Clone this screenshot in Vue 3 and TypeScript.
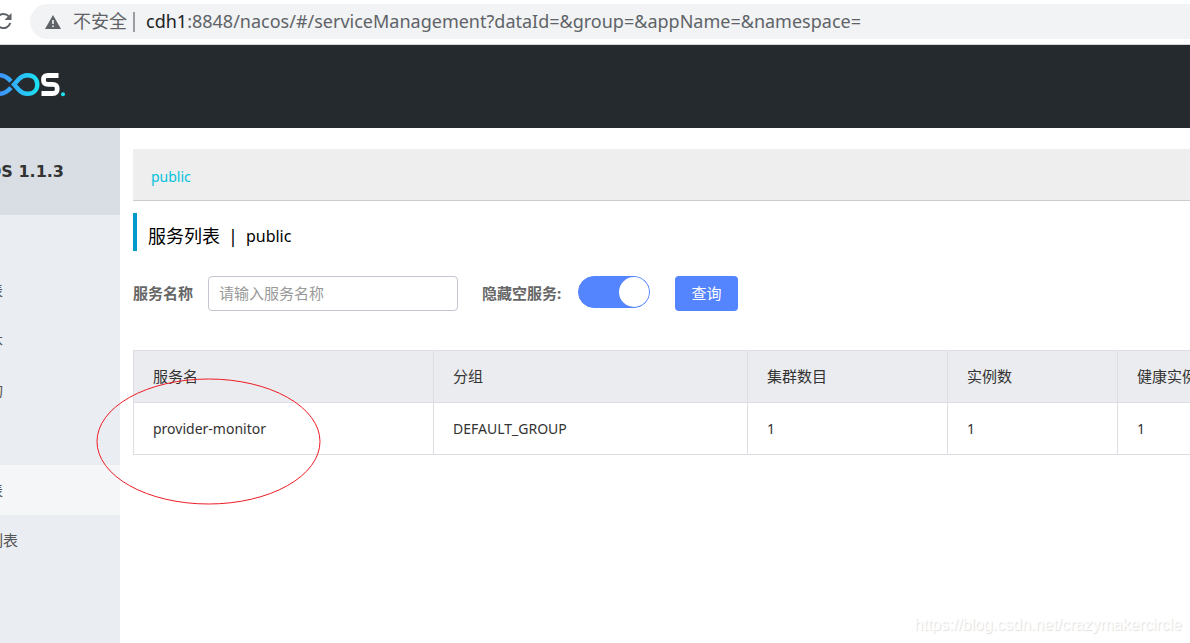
<script setup lang="ts">
import { ref } from 'vue'

interface Service {
  name: string
  group: string
  clusters: number
  instances: number
  healthy: number
}

const keyword = ref('')
const hideEmpty = ref(true)
const services: Service[] = [
  { name: 'provider-monitor', group: 'DEFAULT_GROUP', clusters: 1, instances: 1, healthy: 1 },
]
</script>

<template>
  <div class="window">
    <div class="toolbar">
      <button class="reload" type="button" aria-label="Reload">
        <svg width="24" height="35" viewBox="0 0 24 35">
          <path d="M22.300 19 A7 7 0 1 1 20.800 12.400" fill="none" stroke="#5f6368" stroke-width="2" />
          <path d="M23.500 9 V16 H16.500 Z" fill="#5f6368" />
        </svg>
      </button>
      <div class="address">
        <svg class="warning" width="16" height="14" viewBox="0 0 16 14">
          <path d="M8 0 L16 14 H0 Z" fill="#5f6368" />
          <path d="M7.200 5 H8.800 V9 H7.200 Z M7.200 10.400 H8.800 V12 H7.200 Z" fill="#f1f3f4" />
        </svg>
        <span class="insecure">不安全</span>
        <span class="divider"></span>
        <span class="url"><b>cdh1</b>:8848/nacos/#/serviceManagement?dataId=&amp;group=&amp;appName=&amp;namespace=</span>
      </div>
    </div>

    <header class="header">
      <svg class="logo" width="66" height="24" viewBox="0 0 66 24" aria-label="Nacos">
        <defs>
          <linearGradient id="loop" gradientUnits="userSpaceOnUse" x1="0" y1="0" x2="39" y2="0">
            <stop offset="0" stop-color="#3f93ff" />
            <stop offset="1" stop-color="#1be3f2" />
          </linearGradient>
        </defs>
        <g fill="none" stroke="url(#loop)" stroke-width="4.400">
          <path d="M-6 2.200 H0 C4.500 2.200 7 4 11 8.200" />
          <path d="M-6 20.800 H0 C4.500 20.800 7 19 11 14.800" />
          <path d="M14 11.500 L19 6 C21.500 3.300 24 2.200 27.500 2.200 C33.500 2.200 37.300 6 37.300 11.500 C37.300 17 33.500 20.800 27.500 20.800 C24 20.800 21.500 19.700 19 17 Z" />
        </g>
        <path d="M58.500 2.500 H48 C44.500 2.500 43.500 3.500 43.500 6.800 C43.500 10 44.500 11.300 48 11.300 H52.500 C56 11.300 57.200 12.500 57.200 15.800 C57.200 19.300 56 20.500 52.500 20.500 H41.500" fill="none" stroke="#fff" stroke-width="4.800" />
        <circle cx="63" cy="21.300" r="2" fill="#1be3f2" />
      </svg>
    </header>

    <div class="body">
      <aside class="sidebar">
        <div class="version">NACOS 1.1.3</div>
        <nav class="menu">
          <a class="heading" href="#">配置管理</a>
          <a href="#">配置列表</a>
          <a href="#">历史版本</a>
          <a href="#">监听查询</a>
          <a class="heading" href="#">服务管理</a>
          <a class="active" href="#">服务列表</a>
          <a class="wide" href="#">订阅者列表</a>
        </nav>
      </aside>

      <main class="content">
        <div class="namespaces"><a href="#">public</a></div>
        <h1 class="title"><span>服务列表</span><span>|</span><span class="current">public</span></h1>

        <form class="filters" @submit.prevent>
          <label for="service-name">服务名称</label>
          <input id="service-name" v-model="keyword" class="field" type="text" placeholder="请输入服务名称" />
          <label class="hide-label" for="hide-empty">隐藏空服务:</label>
          <input id="hide-empty" v-model="hideEmpty" class="switch" type="checkbox" />
          <button class="search" type="submit">查询</button>
        </form>

        <table class="services">
          <colgroup>
            <col class="c-name" />
            <col class="c-group" />
            <col class="c-clusters" />
            <col class="c-instances" />
            <col />
          </colgroup>
          <thead>
            <tr>
              <th>服务名</th>
              <th>分组</th>
              <th>集群数目</th>
              <th>实例数</th>
              <th>健康实例数</th>
            </tr>
          </thead>
          <tbody>
            <tr v-for="s in services" :key="s.name">
              <td>{{ s.name }}</td>
              <td>{{ s.group }}</td>
              <td>{{ s.clusters }}</td>
              <td>{{ s.instances }}</td>
              <td>{{ s.healthy }}</td>
            </tr>
          </tbody>
        </table>
      </main>
    </div>

    <svg class="marker" width="226" height="128" viewBox="0 0 226 128">
      <ellipse cx="112.500" cy="64.500" rx="111.500" ry="62.500" fill="none" stroke="#ed1c24" stroke-width="1" />
    </svg>
    <div class="watermark">https://blog.csdn.net/crazymakercircle</div>
  </div>
</template>

<style>
body {
  margin: 0;
}
</style>

<style scoped>
.window {
  position: relative;
  display: flex;
  flex-direction: column;
  min-height: 100vh;
  overflow: hidden;
  background: #fff;
  color: #333;
  font: 15px/20px "Noto Sans", "Noto Sans CJK SC", sans-serif;
}
.window * {
  box-sizing: border-box;
}
.toolbar {
  display: flex;
  align-items: flex-start;
  height: 45px;
  padding-top: 4px;
  border-bottom: 1px solid #d5d7da;
}
.reload {
  flex: none;
  width: 24px;
  height: 35px;
  margin: 0 18px 0 -12px;
  padding: 0;
  border: 0;
  background: none;
}
.reload svg {
  display: block;
}
.address {
  display: flex;
  flex: 1;
  align-items: center;
  height: 35px;
  padding-left: 15px;
  border-radius: 18px 0 0 18px;
  background: #f1f3f4;
  color: #5f6368;
  font-size: 18px;
  line-height: 35px;
  white-space: nowrap;
}
.insecure {
  margin-left: 12px;
}
.divider {
  width: 2px;
  height: 20px;
  margin: 0 11px 0 6px;
  background: #9a9da1;
}
.url b {
  color: #202124;
  font-weight: 400;
}
.header {
  height: 83px;
  padding-top: 28px;
  background: #252a2f;
}
.logo {
  display: block;
}
.body {
  display: flex;
  flex: 1;
}
.sidebar {
  flex: none;
  width: 120px;
  overflow: hidden;
  background: #eaedf1;
}
.version {
  display: flex;
  align-items: center;
  justify-content: flex-end;
  height: 87px;
  padding-right: 56px;
  background: #d9dde4;
  font-family: "DejaVu Sans", Verdana, sans-serif;
  font-size: 16px;
  font-weight: 700;
  white-space: nowrap;
}
.menu a {
  display: flex;
  align-items: center;
  justify-content: flex-end;
  height: 50px;
  padding-right: 117px;
  color: #555;
  text-decoration: none;
  white-space: nowrap;
}
.menu .heading {
  visibility: hidden;
}
.menu .active {
  background: #f5f6f8;
}
.menu .wide {
  padding-right: 102px;
}
.content {
  flex: 1;
  min-width: 0;
  padding: 21px 0 0 13px;
}
.namespaces {
  height: 52px;
  padding: 17px 18px;
  border-bottom: 1px solid #ccc;
  background: #eee;
}
.namespaces a {
  color: #00c1de;
  font-size: 14px;
  text-decoration: none;
}
.title {
  display: flex;
  gap: 8px;
  height: 38px;
  margin: 12px 0 25px;
  padding-left: 11px;
  border-left: 4px solid #09c;
  color: #000;
  font-size: 18px;
  font-weight: 400;
  line-height: 46px;
}
.title .current {
  font-size: 16px;
}
.filters {
  display: flex;
  height: 35px;
  margin-bottom: 39px;
  color: #666;
  font-weight: 700;
  line-height: 35px;
}
.field {
  width: 250px;
  margin-left: 15px;
  padding: 0 10px;
  border: 1px solid #c4c6cf;
  border-radius: 4px;
  background: #fff;
  font: inherit;
  font-weight: 400;
}
.field::placeholder {
  color: #999;
  opacity: 1;
}
.hide-label {
  width: 81px;
  margin-left: 24px;
}
.switch {
  width: 72px;
  height: 32px;
  margin: 0 25px 0 15px;
  border: 1px solid #5584ff;
  border-radius: 16px;
  appearance: none;
  background: #5584ff;
}
.switch::before {
  display: block;
  width: 30px;
  height: 30px;
  border-radius: 50%;
  background: #fff;
  content: "";
}
.switch:checked::before {
  margin-left: auto;
}
.search {
  width: 63px;
  padding: 0;
  border: 0;
  border-radius: 4px;
  background: #5584ff;
  color: #fff;
  font: inherit;
  font-weight: 400;
}
.services {
  width: 100%;
  border-collapse: collapse;
  table-layout: fixed;
}
.c-name {
  width: 300px;
}
.c-group {
  width: 314px;
}
.c-clusters {
  width: 200px;
}
.c-instances {
  width: 170px;
}
.services th,
.services td {
  height: 52px;
  padding: 0 0 2px 19px;
  overflow: hidden;
  border: 1px solid #dcdee3;
  font-weight: 400;
  text-align: left;
  white-space: nowrap;
}
.services td {
  padding-bottom: 0;
  font-size: 14px;
}
.services th:last-child,
.services td:last-child {
  border-right: 0;
}
.services th {
  background: #ebecf0;
}
.marker {
  position: absolute;
  top: 377px;
  left: 96px;
  pointer-events: none;
}
.watermark {
  position: absolute;
  right: 8px;
  bottom: 8px;
  color: #fff;
  font: 16px/20px "Liberation Sans", Arial, sans-serif;
  text-shadow: 1px 1px 1px #ddd;
}
</style>
